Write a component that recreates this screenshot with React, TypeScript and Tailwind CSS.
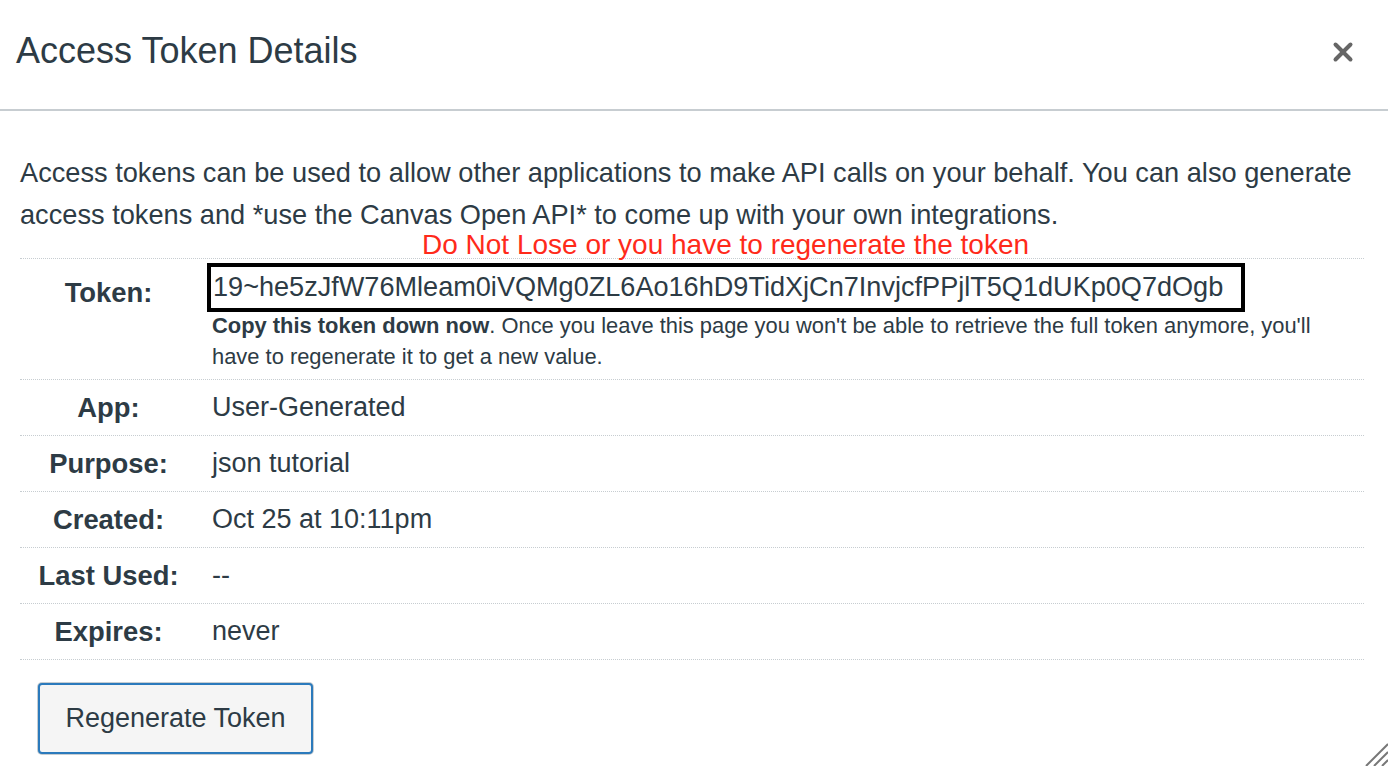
import { X } from "lucide-react";

const rows = [
  { label: "App:", value: "User-Generated" },
  { label: "Purpose:", value: "json tutorial" },
  { label: "Created:", value: "Oct 25 at 10:11pm" },
  { label: "Last Used:", value: "--" },
  { label: "Expires:", value: "never" },
];

function Row({ label, children, tall }: { label: string; children: React.ReactNode; tall?: boolean }) {
  return (
    <div className={"flex border-b border-dotted border-[#c7cdd1] " + (tall ? "h-[121px]" : "h-[56px] items-center")}>
      <div className={"w-[177px] shrink-0 text-center font-bold text-[27.4px] " + (tall ? "pt-[13px]" : "")}>{label}</div>
      <div className="flex-1 pl-[15px]">{children}</div>
    </div>
  );
}

export default function App() {
  return (
    <div
      className="w-[1388px] h-[766px] bg-white text-[#2d3b45] relative overflow-hidden"
      style={{ fontFamily: "'Liberation Sans', Arial, sans-serif" }}
    >
      <div className="h-[111px] border-b-2 border-[#c7cdd1] flex items-center justify-between pl-[16px] pr-[30px]">
        <h1 className="text-[36px] leading-none pb-[8px]">Access Token Details</h1>
        <X className="w-[30px] h-[30px] text-[#666] mb-[6px]" strokeWidth={3.2} />
      </div>

      <div className="px-[20px] pt-[41px]">
        <p className="text-[27.2px] leading-[42px] whitespace-nowrap">
          Access tokens can be used to allow other applications to make API calls on your behalf. You can also generate
          <br />
          access tokens and *use the Canvas Open API* to come up with your own integrations.
        </p>
        <div className="h-[27px] pl-[402px] text-[28px] leading-[28px] text-[#ff2a1a] -mt-[5px]">
          Do Not Lose or you have to regenerate the token
        </div>

        <div className="w-[1344px] border-t border-dotted border-[#c7cdd1]">
          <Row label="Token:" tall>
            <div className="pt-[4px] -ml-[5px]">
              <div className="inline-block border-[4px] border-black pl-[2px] pr-[18px] h-[49px] text-[27.1px] leading-[40px]">
                19~he5zJfW76Mleam0iVQMg0ZL6Ao16hD9TidXjCn7InvjcfPPjlT5Q1dUKp0Q7dOgb
              </div>
            </div>
            <div className="text-[21.9px] leading-[31px] -mt-[2px] whitespace-nowrap">
              <span className="font-bold">Copy this token down now</span>. Once you leave this page you won't be able to
              retrieve the full token anymore, you'll
              <br />
              have to regenerate it to get a new value.
            </div>
          </Row>
          {rows.map((r) => (
            <Row key={r.label} label={r.label}>
              <span className="text-[27px]">{r.value}</span>
            </Row>
          ))}
        </div>

        <button className="mt-[23px] ml-[18px] w-[275px] h-[71px] rounded-[4px] bg-[#f5f5f5] border-2 border-[#2b7abc] ring-1 ring-[#c7cdd1] text-[27px] text-[#2d3b45]">
          Regenerate Token
        </button>
      </div>

      <svg className="absolute right-0 bottom-0" width="24" height="24" viewBox="0 0 24 24">
        <line x1="24" y1="2" x2="2" y2="24" stroke="#777" strokeWidth="2" />
        <line x1="24" y1="10" x2="10" y2="24" stroke="#777" strokeWidth="2" />
        <line x1="24" y1="18" x2="18" y2="24" stroke="#777" strokeWidth="2" />
      </svg>
    </div>
  );
}
